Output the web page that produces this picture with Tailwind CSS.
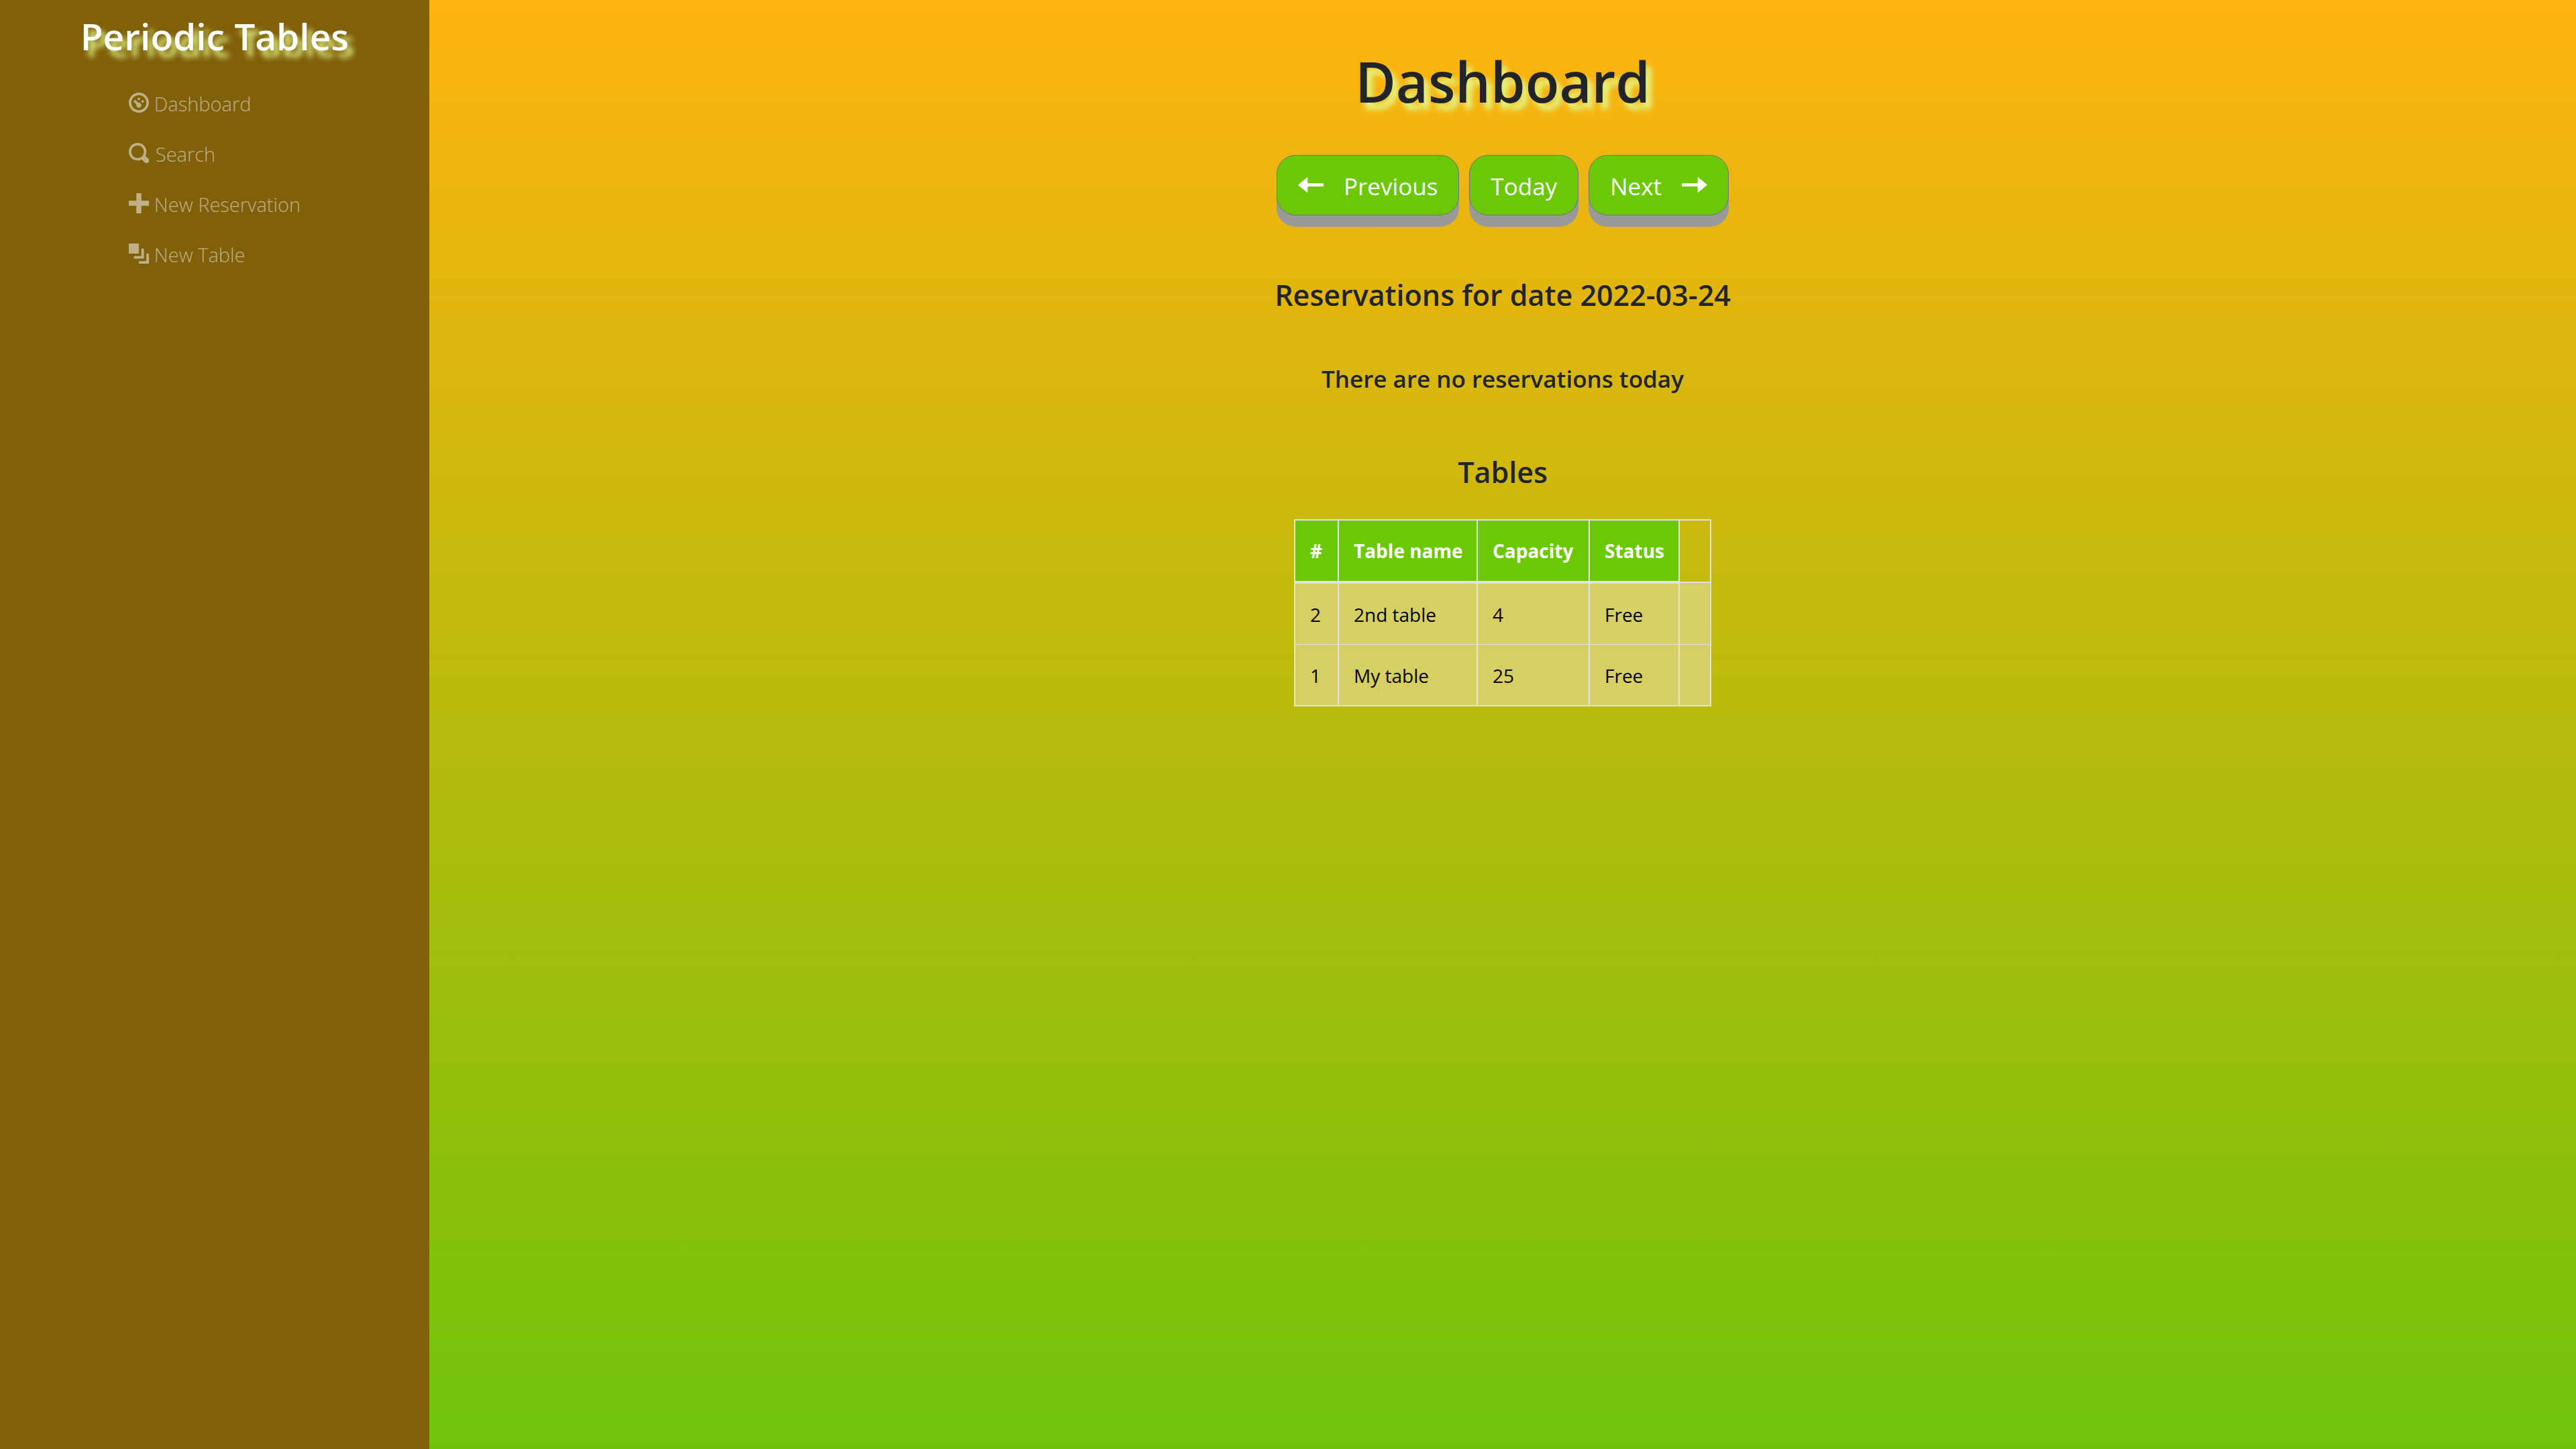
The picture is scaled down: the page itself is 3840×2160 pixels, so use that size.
<!DOCTYPE html>
<html lang="en">
<head>
<meta charset="utf-8">
<meta name="viewport" content="width=device-width, initial-scale=1">
<title>Periodic Tables</title>
<script src="https://cdn.jsdelivr.net/npm/@tailwindcss/browser@4"></script>
</head>
<body class="flex min-h-screen bg-[#ffb30f] font-['Open_Sans','Noto_Sans',sans-serif] text-[#212529]">
  <aside class="w-1/6 shrink-0 bg-[#81600a] pt-[18px]">
    <h2 class="text-center text-[55px] leading-[72px] font-semibold text-white [text-shadow:8px_10px_8px_#e2f98b]">Periodic Tables</h2>
    <nav class="mt-[27px] flex justify-center text-[29px] font-[350] text-white/50">
      <ul>
        <li><a href="#dashboard" class="flex h-[75px] items-center gap-2">
          <svg class="mb-1 size-[30px]" viewBox="0 0 8 8" fill="currentColor" aria-hidden="true"><path d="M4 0c-2.2 0-4 1.8-4 4s1.8 4 4 4 4-1.8 4-4-1.8-4-4-4zm0 1c1.66 0 3 1.34 3 3s-1.34 3-3 3-3-1.34-3-3 1.34-3 3-3zm0 1c-.28 0-.5.22-.5.5s.22.5.5.5.5-.22.5-.5-.22-.5-.5-.5zm-1.66 1a.5.5 0 0 0-.19.84l.91.91c-.02.08-.06.16-.06.25 0 .55.45 1 1 1s1-.45 1-1-.45-1-1-1c-.09 0-.17.04-.25.06l-.91-.91a.5.5 0 0 0-.5-.15zm3.16 0c-.28 0-.5.22-.5.5s.22.5.5.5.5-.22.5-.5-.22-.5-.5-.5z"/></svg>
          <span>Dashboard</span></a></li>
        <li><a href="#search" class="flex h-[75px] items-center gap-[10px]">
          <svg class="mb-1 size-[30px]" viewBox="0 0 8 8" fill="currentColor" aria-hidden="true"><path d="M3.5 0c-1.93 0-3.5 1.57-3.5 3.5s1.57 3.5 3.5 3.5c.59 0 1.17-.14 1.66-.41a1 1 0 0 0 .13.13l1 1a1.02 1.02 0 1 0 1.44-1.44l-1-1a1 1 0 0 0-.16-.13c.27-.49.44-1.06.44-1.66 0-1.93-1.55-3.5-3.5-3.5zm0 1c1.39 0 2.5 1.11 2.5 2.5 0 .66-.24 1.27-.66 1.72-.01.01-.02.02-.03.03a1 1 0 0 0-.13.13c-.44.4-1.04.63-1.69.63-1.39 0-2.5-1.11-2.5-2.5s1.11-2.5 2.5-2.5z"/></svg>
          <span>Search</span></a></li>
        <li><a href="#new-reservation" class="flex h-[75px] items-center gap-2">
          <svg class="mb-1 size-[30px]" viewBox="0 0 8 8" fill="currentColor" aria-hidden="true"><path d="M3 0v3h-3v2h3v3h2v-3h3v-2h-3v-3h-2z"/></svg>
          <span>New Reservation</span></a></li>
        <li><a href="#new-table" class="flex h-[75px] items-center gap-2">
          <svg class="mb-1 size-[30px]" viewBox="0 0 8 8" fill="currentColor" aria-hidden="true"><path d="M0 0v4h4v-4h-4zm5 2v3h-3v1h4v-4h-1zm2 2v3h-3v1h4v-4h-1z"/></svg>
          <span>New Table</span></a></li>
      </ul>
    </nav>
  </aside>
  <main class="flex grow flex-col items-center bg-linear-to-b/srgb from-[#ffb30f] to-[#70c30b] pt-[67px]">
    <h1 class="text-[83px] leading-[108px] font-semibold [text-shadow:8px_10px_8px_#e2f98b]">Dashboard</h1>
    <div class="mt-14 flex gap-[15px] text-[35px] text-white">
      <button type="button" class="flex h-[90px] items-center gap-[30px] rounded-[28px] border border-[#6c757d] bg-[#6cc707] px-[31px] pt-1 shadow-[0_17px_#999]">
        <svg class="size-[38px]" viewBox="0 0 8 8" fill="currentColor" aria-hidden="true"><path d="M3 1l-3 2.53 3 2.47v-2h5v-1h-5v-2z"/></svg>
        <span>Previous</span></button>
      <button type="button" class="flex h-[90px] items-center rounded-[28px] border border-[#6c757d] bg-[#6cc707] px-[31px] pt-1 shadow-[0_17px_#999]">Today</button>
      <button type="button" class="flex h-[90px] items-center gap-[30px] rounded-[28px] border border-[#6c757d] bg-[#6cc707] px-[31px] pt-1 shadow-[0_17px_#999]">
        <span>Next</span>
        <svg class="size-[38px]" viewBox="0 0 8 8" fill="currentColor" aria-hidden="true"><path d="M5 1v2h-5v1h5v2l3-2.53-3-2.47z"/></svg></button>
    </div>
    <h3 class="mt-[92px] text-[43px] leading-[54px] font-semibold">Reservations for date 2022-03-24</h3>
    <h4 class="mt-[76px] text-[35px] leading-[44px] font-semibold">There are no reservations today</h4>
    <h3 class="mt-[90px] text-[43px] leading-[54px] font-semibold">Tables</h3>
    <table class="mt-[43px] w-[622px] table-fixed border-collapse border-2 border-[#dee2e6] text-left text-[28px] text-black">
      <colgroup><col class="w-[65px]"><col class="w-[207px]"><col class="w-[167px]"><col class="w-[134px]"><col></colgroup>
      <thead class="text-white">
        <tr class="h-[93px]">
          <th class="border-2 border-b-4 border-[#dee2e6] bg-[#6cc707] px-[22px]">#</th>
          <th class="border-2 border-b-4 border-[#dee2e6] bg-[#6cc707] px-[22px] whitespace-nowrap">Table name</th>
          <th class="border-2 border-b-4 border-[#dee2e6] bg-[#6cc707] px-[22px]">Capacity</th>
          <th class="border-2 border-b-4 border-[#dee2e6] bg-[#6cc707] px-[22px]">Status</th>
          <td class="border-2 border-[#dee2e6]"></td>
        </tr>
      </thead>
      <tbody>
        <tr class="h-[92px] bg-[#d6cf63]">
          <td class="border-2 border-b border-[#dee2e6] px-[22px] pt-[2px]">2</td>
          <td class="border-2 border-b border-[#dee2e6] px-[22px] pt-[2px]">2nd table</td>
          <td class="border-2 border-b border-[#dee2e6] px-[22px] pt-[2px]">4</td>
          <td class="border-2 border-b border-[#dee2e6] px-[22px] pt-[2px]">Free</td>
          <td class="border-2 border-b border-[#dee2e6]"></td>
        </tr>
        <tr class="h-[92px] bg-[#d6cf63]">
          <td class="border-2 border-t border-[#dee2e6] px-[22px] pt-[2px]">1</td>
          <td class="border-2 border-t border-[#dee2e6] px-[22px] pt-[2px]">My table</td>
          <td class="border-2 border-t border-[#dee2e6] px-[22px] pt-[2px]">25</td>
          <td class="border-2 border-t border-[#dee2e6] px-[22px] pt-[2px]">Free</td>
          <td class="border-2 border-t border-[#dee2e6]"></td>
        </tr>
      </tbody>
    </table>
  </main>
</body>
</html>
